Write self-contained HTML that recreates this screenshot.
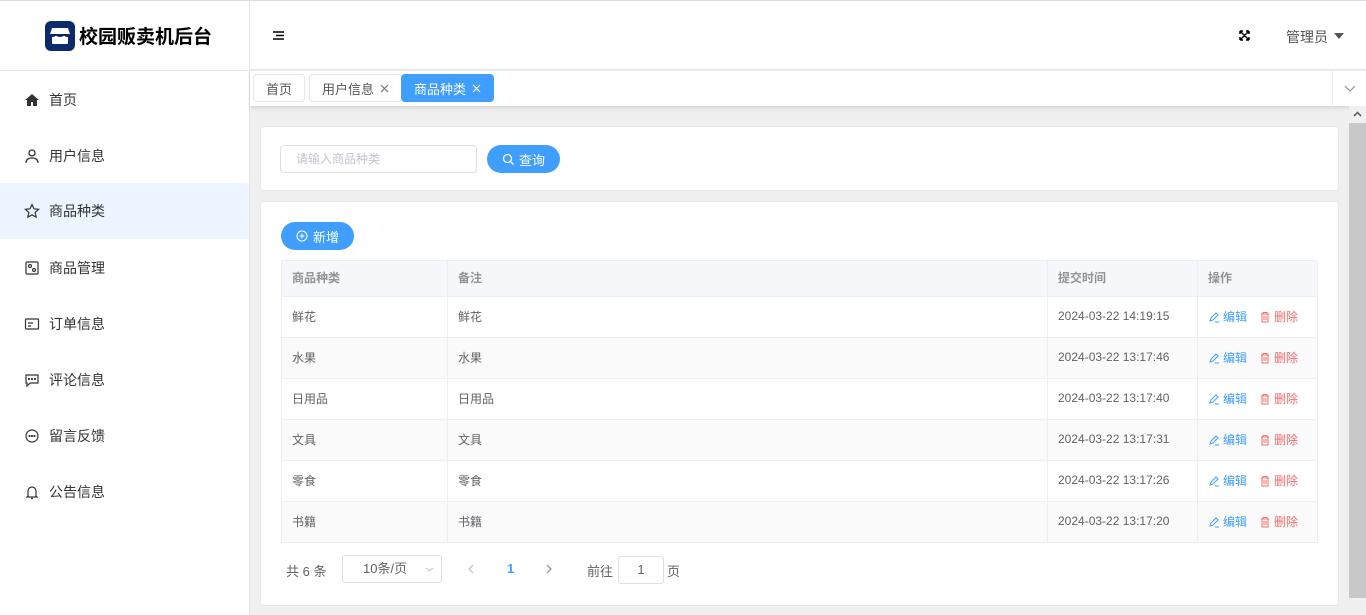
<!DOCTYPE html>
<html><head><meta charset="utf-8"><style>
*{box-sizing:border-box;margin:0;padding:0}
body{width:1366px;height:615px;overflow:hidden;font-family:"Liberation Sans","Noto Sans CJK SC",sans-serif;font-size:13px;color:#333;background:#f0f0f0;position:relative}
.abs{position:absolute}
.side{left:0;top:0;width:250px;height:615px;background:#fff;border-right:1px solid #e6e6e6}
.topline{left:0;top:0;width:1366px;height:1px;background:#ddd}
.logo{left:45px;top:21px;width:30px;height:30px;background:#0d2a6b;border-radius:6px}
.title{left:79px;top:22px;font-size:19px;font-weight:bold;color:#000}
.sb{left:0;top:70px;width:249px;height:1px;background:#e6e6e6}
.item{left:0;width:249px;height:56px;display:flex;align-items:center;padding-left:24px;font-size:14px;color:#333}
.item svg{width:16px;height:16px;margin-right:9px}
.active{background:#ecf5ff}
.hdr{left:250px;top:1px;width:1116px;height:69px;background:#fff;border-bottom:1px solid #e6e6e6}
.tags{left:250px;top:71px;width:1116px;height:35px;background:#fff;box-shadow:0 2px 4px rgba(0,0,0,.12)}
.tag{height:28px;border:1px solid #e4e7ed;border-radius:4px;font-size:13px;color:#555;display:flex;align-items:center;padding:0 12px;background:#fff}
.tag.on{background:#409eff;border-color:#409eff;color:#fff}
.tag svg{margin-left:6px}
.card{background:#fff;border:1px solid #e8e8e8;border-radius:4px}
.btn{background:#409eff;color:#fff;border-radius:14px;height:28px;display:flex;align-items:center;justify-content:center;font-size:13px}
.btn svg{margin-right:5px}
table{border-collapse:collapse;position:absolute;left:281px;top:260px;width:1037px;font-size:12px;color:#606266}
td,th{border:1px solid #ebeef5;padding:0 10px;text-align:left;height:41px;padding-bottom:2px}
th{height:36px;background:#f5f7fa;color:#909399;font-weight:bold}
tr:nth-child(odd) td{background:#fafafa}
.ed{color:#409eff}.de{color:#f56c6c;margin-left:12px}
.ed svg,.de svg{vertical-align:-2px;margin-right:3px}
</style></head><body>
<div class="abs side"></div>
<div class="abs hdr"></div>
<div class="abs topline"></div>
<div class="abs logo"><svg width="30" height="30" viewBox="0 0 30 30"><path d="M7 7h16l2 6H5z" fill="#fff"/><rect x="7" y="15" width="16" height="8" rx="1" fill="#fff"/><path d="M5 13c0 2 2 3 3 3s3-1 3-3c0 2 2 3 4 3s4-1 4-3c0 2 2 3 3 3s3-1 3-3" fill="#0d2a6b"/></svg></div>
<div class="abs title">校园贩卖机后台</div>
<div class="abs sb"></div>
<div class="abs item" style="top:72px"><svg viewBox="0 0 16 16"><path d="M8 2L1 8h2v6h4v-4h2v4h4V8h2z" fill="#333"/></svg>首页</div>
<div class="abs item" style="top:128px"><svg viewBox="0 0 16 16" fill="none" stroke="#333" stroke-width="1.3"><circle cx="8" cy="5" r="3"/><path d="M2 15c0-4 3-5 6-5s6 1 6 5"/></svg>用户信息</div>
<div class="abs item active" style="top:183px"><svg viewBox="0 0 16 16" fill="none" stroke="#333" stroke-width="1.2"><path d="M8 1.5l2 4.3 4.6.5-3.4 3.2.9 4.6L8 11.8 3.9 14.1l.9-4.6L1.4 6.3 6 5.8z"/></svg>商品种类</div>
<div class="abs item" style="top:240px"><svg viewBox="0 0 16 16" fill="none" stroke="#333" stroke-width="1.2"><rect x="2" y="2" width="12" height="12" rx="1"/><circle cx="6" cy="6" r="1.5"/><circle cx="10" cy="10" r="1.5"/></svg>商品管理</div>
<div class="abs item" style="top:296px"><svg viewBox="0 0 16 16" fill="none" stroke="#333" stroke-width="1.2"><rect x="1.5" y="3" width="13" height="10" rx="1"/><path d="M4 7h5M4 10h3"/></svg>订单信息</div>
<div class="abs item" style="top:352px"><svg viewBox="0 0 16 16" fill="none" stroke="#333" stroke-width="1.2"><path d="M2 3h12v8H6l-3 3v-3H2z"/><circle cx="5" cy="7" r=".5" fill="#333"/><circle cx="8" cy="7" r=".5" fill="#333"/><circle cx="11" cy="7" r=".5" fill="#333"/></svg>评论信息</div>
<div class="abs item" style="top:408px"><svg viewBox="0 0 16 16" fill="none" stroke="#333" stroke-width="1.2"><circle cx="8" cy="8" r="6"/><circle cx="5.5" cy="8" r=".5" fill="#333"/><circle cx="8" cy="8" r=".5" fill="#333"/><circle cx="10.5" cy="8" r=".5" fill="#333"/></svg>留言反馈</div>
<div class="abs item" style="top:464px"><svg viewBox="0 0 16 16" fill="none" stroke="#333" stroke-width="1.2"><path d="M4 12V7a4 4 0 018 0v5l1 1H3zM7 14.5h2"/></svg>公告信息</div>
<svg class="abs" style="left:273px;top:31px" width="11" height="9" viewBox="0 0 11 9" stroke="#000" stroke-width="1.6"><path d="M0 1h11M3 4.5h8M0 8h11"/></svg>
<svg class="abs" style="left:1239px;top:30px" width="11" height="11" viewBox="0 0 11 11" stroke="#000" stroke-width="1.5" fill="none"><path d="M1 1l9 9M10 1L1 10M1 1h3M1 1v3M10 1h-3M10 1v3M1 10h3M1 10v-3M10 10h-3M10 10v-3"/></svg>
<div class="abs" style="left:1286px;top:27px;font-size:14px;color:#555">管理员</div>
<svg class="abs" style="left:1334px;top:33px" width="10" height="6"><path d="M0 0h10L5 6z" fill="#555"/></svg>
<div class="abs tags"></div>
<div class="abs tag" style="left:253px;top:74px">首页</div>
<div class="abs tag" style="left:309px;top:74px">用户信息<svg width="9" height="9" stroke="#777" stroke-width="1.2"><path d="M1 1l7 7M8 1L1 8"/></svg></div>
<div class="abs tag on" style="left:401px;top:74px">商品种类<svg width="9" height="9" stroke="#fff" stroke-width="1.2"><path d="M1 1l7 7M8 1L1 8"/></svg></div>
<div class="abs" style="left:1332px;top:71px;width:34px;height:35px;background:#fff;border-left:1px solid #eee"><svg style="margin:14px 0 0 11px" width="12" height="7" stroke="#888" fill="none"><path d="M1 1l5 5 5-5"/></svg></div>
<div class="abs" style="left:1349px;top:106px;width:17px;height:509px;background:#f0f0f0"></div>
<svg class="abs" style="left:1353px;top:111px" width="9" height="6" stroke="#555" stroke-width="1.5" fill="none"><path d="M1 5l3.5-3.5L8 5"/></svg>
<div class="abs" style="left:1349px;top:123px;width:17px;height:475px;background:#c8c8c8"></div>
<div class="abs card" style="left:260px;top:126px;width:1079px;height:65px"></div>
<div class="abs" style="left:280px;top:145px;width:197px;height:28px;border:1px solid #dcdfe6;border-radius:4px;padding-left:15px;line-height:26px;font-size:12px;color:#c0c4cc">请输入商品种类</div>
<div class="abs btn" style="left:487px;top:145px;width:73px"><svg width="12" height="12" stroke="#fff" stroke-width="1.3" fill="none"><circle cx="5.5" cy="5.5" r="4"/><path d="M8.5 8.5l3 3"/></svg>查询</div>
<div class="abs card" style="left:260px;top:201px;width:1079px;height:405px"></div>
<div class="abs btn" style="left:281px;top:222px;width:73px"><svg width="12" height="12" stroke="#fff" stroke-width="1.1" fill="none"><circle cx="6" cy="6" r="5"/><path d="M6 3.5v5M3.5 6h5"/></svg>新增</div>
<table>
<tr><th style="width:166px">商品种类</th><th style="width:600px">备注</th><th style="width:150px">提交时间</th><th>操作</th></tr>
<tr><td>鲜花</td><td>鲜花</td><td>2024-03-22 14:19:15</td><td><span class="ed"><svg width="12" height="12" stroke="#409eff" fill="none"><path d="M2 10l1-3 5-5 2 2-5 5zM7 11h4"/></svg>编辑</span><span class="de"><svg width="12" height="12" stroke="#f56c6c" fill="none"><path d="M2 3h8M4 3V1.5h4V3M3 3v8h6V3M5 5v4M7 5v4"/></svg>删除</span></td></tr>
<tr><td>水果</td><td>水果</td><td>2024-03-22 13:17:46</td><td><span class="ed"><svg width="12" height="12" stroke="#409eff" fill="none"><path d="M2 10l1-3 5-5 2 2-5 5zM7 11h4"/></svg>编辑</span><span class="de"><svg width="12" height="12" stroke="#f56c6c" fill="none"><path d="M2 3h8M4 3V1.5h4V3M3 3v8h6V3M5 5v4M7 5v4"/></svg>删除</span></td></tr>
<tr><td>日用品</td><td>日用品</td><td>2024-03-22 13:17:40</td><td><span class="ed"><svg width="12" height="12" stroke="#409eff" fill="none"><path d="M2 10l1-3 5-5 2 2-5 5zM7 11h4"/></svg>编辑</span><span class="de"><svg width="12" height="12" stroke="#f56c6c" fill="none"><path d="M2 3h8M4 3V1.5h4V3M3 3v8h6V3M5 5v4M7 5v4"/></svg>删除</span></td></tr>
<tr><td>文具</td><td>文具</td><td>2024-03-22 13:17:31</td><td><span class="ed"><svg width="12" height="12" stroke="#409eff" fill="none"><path d="M2 10l1-3 5-5 2 2-5 5zM7 11h4"/></svg>编辑</span><span class="de"><svg width="12" height="12" stroke="#f56c6c" fill="none"><path d="M2 3h8M4 3V1.5h4V3M3 3v8h6V3M5 5v4M7 5v4"/></svg>删除</span></td></tr>
<tr><td>零食</td><td>零食</td><td>2024-03-22 13:17:26</td><td><span class="ed"><svg width="12" height="12" stroke="#409eff" fill="none"><path d="M2 10l1-3 5-5 2 2-5 5zM7 11h4"/></svg>编辑</span><span class="de"><svg width="12" height="12" stroke="#f56c6c" fill="none"><path d="M2 3h8M4 3V1.5h4V3M3 3v8h6V3M5 5v4M7 5v4"/></svg>删除</span></td></tr>
<tr><td>书籍</td><td>书籍</td><td>2024-03-22 13:17:20</td><td><span class="ed"><svg width="12" height="12" stroke="#409eff" fill="none"><path d="M2 10l1-3 5-5 2 2-5 5zM7 11h4"/></svg>编辑</span><span class="de"><svg width="12" height="12" stroke="#f56c6c" fill="none"><path d="M2 3h8M4 3V1.5h4V3M3 3v8h6V3M5 5v4M7 5v4"/></svg>删除</span></td></tr>
</table>
<div class="abs" style="left:286px;top:561px;color:#606266">共 6 条</div>
<div class="abs" style="left:342px;top:555px;width:100px;height:28px;border:1px solid #dcdfe6;border-radius:3px;padding-left:20px;line-height:26px;color:#606266">10条/页</div>
<svg class="abs" style="left:425px;top:567px" width="9" height="5" stroke="#c0c4cc" fill="none"><path d="M1 1l3.5 3L8 1"/></svg>
<svg class="abs" style="left:468px;top:564px" width="6" height="10" stroke="#c0c4cc" stroke-width="1.3" fill="none"><path d="M5 1L1 5l4 4"/></svg>
<div class="abs" style="left:507px;top:561px;color:#409eff;font-weight:bold">1</div>
<svg class="abs" style="left:546px;top:564px" width="6" height="10" stroke="#999" stroke-width="1.3" fill="none"><path d="M1 1l4 4-4 4"/></svg>
<div class="abs" style="left:587px;top:561px;color:#606266">前往</div>
<div class="abs" style="left:618px;top:556px;width:46px;height:28px;border:1px solid #dcdfe6;border-radius:3px;text-align:center;line-height:26px;color:#606266">1</div>
<div class="abs" style="left:667px;top:561px;color:#606266">页</div>
</body></html>
